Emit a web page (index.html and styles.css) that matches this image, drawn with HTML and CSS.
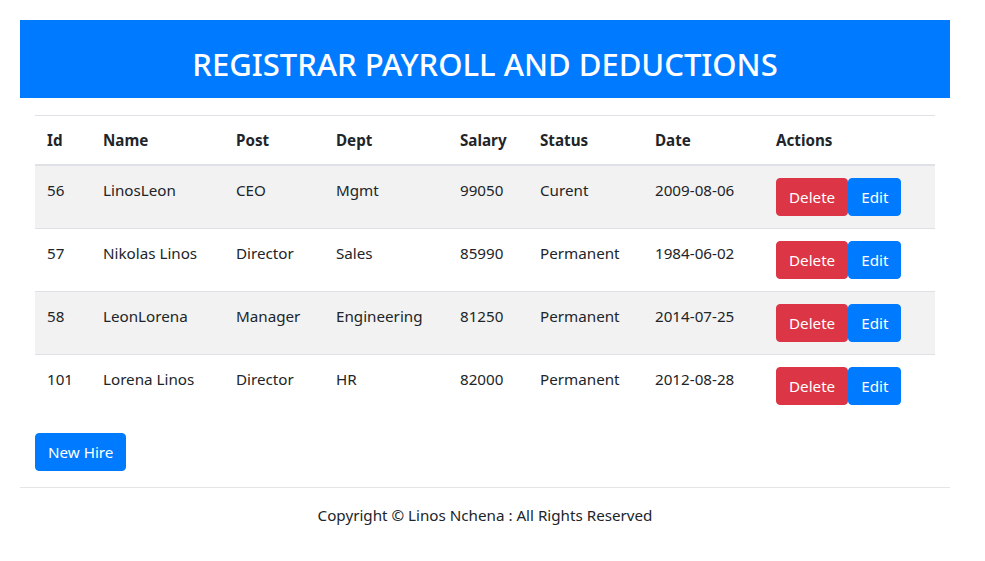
FILE: index.html
```html
<!DOCTYPE html>
<html lang="en">
<head>
<meta charset="utf-8">
<title>Registrar Payroll and Deductions</title>
<link rel="stylesheet" href="styles.css">
</head>
<body>
<div class="page">
  <header class="banner">
    <h1 class="banner-title">REGISTRAR PAYROLL AND DEDUCTIONS</h1>
  </header>
  <main class="content">
    <table class="data-table">
      <colgroup>
        <col class="c-id"><col class="c-name"><col class="c-post"><col class="c-dept">
        <col class="c-salary"><col class="c-status"><col class="c-date"><col class="c-actions">
      </colgroup>
      <thead>
        <tr>
          <th>Id</th><th>Name</th><th>Post</th><th>Dept</th><th>Salary</th><th>Status</th><th>Date</th><th>Actions</th>
        </tr>
      </thead>
      <tbody>
        <tr class="striped">
          <td>56</td><td>LinosLeon</td><td>CEO</td><td>Mgmt</td><td>99050</td><td>Curent</td><td>2009-08-06</td>
          <td><div class="actions"><button class="btn btn-danger">Delete</button><button class="btn btn-primary">Edit</button></div></td>
        </tr>
        <tr>
          <td>57</td><td>Nikolas Linos</td><td>Director</td><td>Sales</td><td>85990</td><td>Permanent</td><td>1984-06-02</td>
          <td><div class="actions"><button class="btn btn-danger">Delete</button><button class="btn btn-primary">Edit</button></div></td>
        </tr>
        <tr class="striped">
          <td>58</td><td>LeonLorena</td><td>Manager</td><td>Engineering</td><td>81250</td><td>Permanent</td><td>2014-07-25</td>
          <td><div class="actions"><button class="btn btn-danger">Delete</button><button class="btn btn-primary">Edit</button></div></td>
        </tr>
        <tr>
          <td>101</td><td>Lorena Linos</td><td>Director</td><td>HR</td><td>82000</td><td>Permanent</td><td>2012-08-28</td>
          <td><div class="actions"><button class="btn btn-danger">Delete</button><button class="btn btn-primary">Edit</button></div></td>
        </tr>
      </tbody>
    </table>
    <button class="btn btn-primary btn-new">New Hire</button>
  </main>
  <footer class="footer">
    <p class="copyright">Copyright © Linos Nchena : All Rights Reserved</p>
  </footer>
</div>
</body>
</html>
```

FILE: styles.css
```css
* { box-sizing: border-box; }

body {
  margin: 0;
  background: #fff;
  color: #212529;
  font-family: "Noto Sans", "Open Sans", sans-serif;
  font-size: 15.2px;
  line-height: 24px;
}

.page {
  width: 930px;
  margin: 20px 0 0 20px;
}

.banner {
  background: #007bff;
  height: 78px;
  display: flex;
  align-items: center;
  justify-content: center;
  padding-top: 10px;
}

.banner-title {
  margin: 0;
  color: #fff;
  font-size: 31px;
  font-weight: 500;
  line-height: 38px;
}

.content {
  padding: 17px 15px 16px;
}

.data-table {
  width: 900px;
  table-layout: fixed;
  border-collapse: collapse;
  margin-bottom: 16px;
}

.c-id { width: 56px; }
.c-name { width: 133px; }
.c-post { width: 100px; }
.c-dept { width: 124px; }
.c-salary { width: 80px; }
.c-status { width: 115px; }
.c-date { width: 121px; }
.c-actions { width: 171px; }

.data-table th,
.data-table td {
  padding: 12px;
  text-align: left;
  vertical-align: top;
  border-top: 1px solid #dee2e6;
}

.data-table th {
  font-weight: 700;
  border-bottom: 2px solid #dee2e6;
}

.data-table tr.striped td {
  background: #f2f2f2;
}

.actions {
  display: flex;
}

.btn {
  font-family: inherit;
  font-size: 15.2px;
  line-height: 24px;
  padding: 6px 12px;
  border: 1px solid transparent;
  border-radius: 4px;
  color: #fff;
  cursor: pointer;
}

.btn-danger { background: #dc3545; border-color: #dc3545; }
.btn-primary { background: #007bff; border-color: #007bff; }

.btn-new { display: block; }

.footer {
  border-top: 1px solid #e5e5e5;
  text-align: center;
  padding-top: 15px;
}

.copyright {
  margin: 0;
}
```
